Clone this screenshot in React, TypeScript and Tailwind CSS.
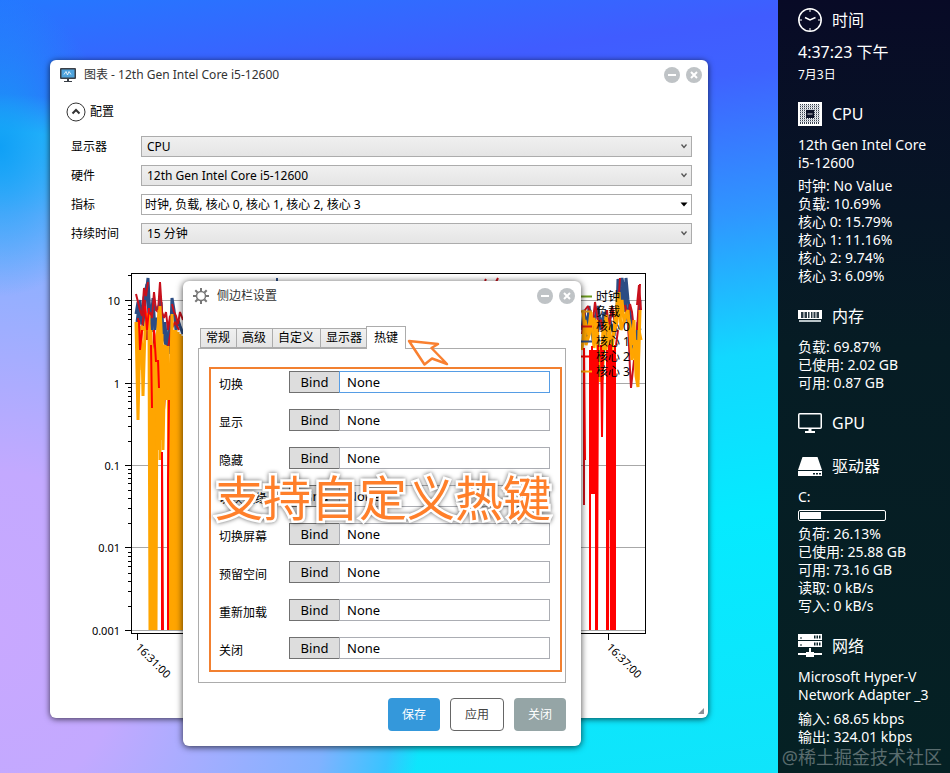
import type { ReactNode } from "react";

const CHART_FIELDS = [
  { id: "monitor", label: "显示器", value: "CPU", options: ["CPU", "内存", "GPU"] },
  { id: "hardware", label: "硬件", value: "12th Gen Intel Core i5-12600", options: ["12th Gen Intel Core i5-12600"] },
  { id: "metrics", label: "指标", value: "时钟, 负载, 核心 0, 核心 1, 核心 2, 核心 3", options: ["时钟, 负载, 核心 0, 核心 1, 核心 2, 核心 3"], flat: true },
  { id: "duration", label: "持续时间", value: "15 分钟", options: ["15 分钟", "30 分钟"] },
];

const HOTKEYS = ["切换", "显示", "隐藏", "切换边缘", "切换屏幕", "预留空间", "重新加载", "关闭"];

const TABS = ["常规", "高级", "自定义", "显示器"];

const DECADES = [
  { label: "10", y: 300.5 },
  { label: "1", y: 383.5 },
  { label: "0.1", y: 465.5 },
  { label: "0.01", y: 547.5 },
  { label: "0.001", y: 630.5 },
];

const LEGEND = [
  { label: "时钟", color: "#6b9a1e" },
  { label: "负载", color: "#d99a1e" },
  { label: "核心 0", color: "#d01818" },
  { label: "核心 1", color: "#2c4d84" },
  { label: "核心 2", color: "#ff0000" },
  { label: "核心 3", color: "#ffa500" },
];

const NAVY = "#2c4d84";
const CRIMSON = "#c8101c";
const RED = "#ff0000";
const ORANGE = "#ffa500";

const SERIES = [
  {
    color: NAVY,
    width: 3,
    points: [
      "136,314 138,302 139,325 141,307 143,326 145,304 146,296 148,278 149,300 151,322 153,298 155,330 157,318 159,320 160,296 162,318 164,340 165,322 167,352 169,330 170,354 172,298 174,310 176,330 178,320 180,326 183,334",
      "137,322 140,300 142,324 144,298 147,284 149,316 152,332 154,305 157,310 161,302 163,336 166,345 168,340 171,316 173,312",
      "582,330 584,310 587,342 589,306 592,334 594,322 598,306 601,330 604,312 607,340 610,320 614,336 617,310 618,279 621,304 623,282 624,312 626,278 628,300 630,312 633,335 636,350 638,322 640,330",
      "586,322 590,310 593,340 600,318 606,330 612,312 616,322 619,290 622,278 625,296 629,330 631,350 634,330 637,345 640,300",
    ],
  },
  {
    color: CRIMSON,
    width: 2,
    points: [
      "136,294 138,302 140,310 142,316 144,288 146,296 148,282 M 150,312 152,318 154,292 156,310 158,312 160,282 162,312 164,318 166,312 168,330 170,316 M 172,304 174,312 176,316 178,324 180,312 183,320",
      "138,318 140,356 142,330 145,300 147,340 149,318 152,410 154,330 157,362 160,318 164,410 168,348 171,330 175,322 179,330",
      "485,281 486,279 M 496,282 498,278",
      "582,334 585,310 588,306 590,312 592,330 595,302 598,322 601,320 604,340 607,310 609,330 612,306 615,322 618,308 620,278 M 625,305 628,320 630,304 632,312 634,330 M 637,305 639,285 641,310",
      "584,350 584,505 M 616,345 618,330 M 628,320 630,370 631,388 634,360 M 637,330 640,284",
    ],
  },
  {
    color: ORANGE,
    width: 3,
    points: [
      "136,322 138,420 140,328 142,348 143,396 145,330 147,314 149,316 150,630 151,330 153,630 154,350 156,630 157,346 159,310 160,320 161,440 162,334 163,450 165,345 166,400 168,346 170,630 171,370 172,314 173,630 174,330 175,630 176,330 177,630 178,332 179,630 180,334 181,630 182,336 183,630",
      "137,322 139,370 141,326 144,330 148,320 152,350 152,630 155,345 158,330 160,306 162,350 164,345 167,380 169,400 172,620 174,345 178,620 180,350 183,620",
      "158,335 158,450 M 160,320 160,460 M 162,345 162,440 M 169,400 169,620",
      "582,350 585,320 588,335 591,312 594,348 597,320 600,382 603,330 606,350 609,325 612,350 615,320 618,296 620,318 622,300 624,322 627,312 630,325 632,345 634,320 636,376 638,387 639,330 641,340",
      "583,310 586,345 590,332 594,318 598,350 602,380 606,315 610,345 614,332 617,322 619,292 621,330 628,310 632,360 636,340 638,380 640,310",
    ],
  },
  {
    color: RED,
    width: 2,
    points: [
      "139,320 140,350 142,330 M 145,306 147,330 149,308 M 154,330 156,362 M 162,630 162,452 163,630 M 168,630 168,480 169,400 M 151,345 152,408 M 158,360 159,388",
      "584,348 585,460 M 590,350 590,630 M 592,346 592,494 M 594,350 594,494 M 596,350 596,630 M 598,345 597,630 M 601,345 602,437 603,350",
      "607,350 607,630 M 609,345 608,630 M 611,345 611,630 M 613,350 613,630 M 615,345 615,630",
      "591,360 591,490 M 593,350 593,492 M 595,350 595,492 M 610,344 610,520 M 612,350 612,560 M 614,350 614,600",
    ],
  },
];

function WindowButtons({ name }: { name: string }) {
  return (
    <div className="ml-auto flex gap-1.5">
      <button type="button" aria-label={`最小化 ${name}`} className="flex size-4 items-center justify-center rounded-full bg-[#bfc3c6]">
        <span className="h-0.5 w-2 bg-white" />
      </button>
      <button type="button" aria-label={`关闭 ${name}`} className="flex size-4 items-center justify-center rounded-full bg-[#bfc3c6]">
        <svg viewBox="0 0 8 8" className="size-2" stroke="white" strokeWidth="2">
          <path d="M1 1L7 7M7 1L1 7" />
        </svg>
      </button>
    </div>
  );
}

function Chart() {
  return (
    <svg viewBox="50 253 658 457" className="mt-[9px] block w-full" fontSize="11" fill="black">
      {DECADES.map((d, i) => (
        <g key={d.label}>
          <path d={`M132 ${d.y}H645`} stroke="#a8a8a8" />
          <path d={`M125 ${d.y}H132`} stroke="black" />
          <text x="120" y={d.y + 4} textAnchor="end">{d.label}</text>
          {i > 0 &&
            [2, 3, 4, 5, 6, 7, 8, 9].map((n) => (
              <path key={n} d={`M128 ${Math.round(d.y - Math.log10(n) * 82.4) + 0.5}H132`} stroke="black" />
            ))}
        </g>
      ))}
      <path d="M128 275.5H132" stroke="black" />
      <path d="M277 281V278" stroke={NAVY} strokeWidth="2" />
      {SERIES.map((s) =>
        s.points.map((p) => (
          <path key={p} d={`M ${p}`} fill="none" stroke={s.color} strokeWidth={s.width} strokeLinejoin="bevel" />
        )),
      )}
      <rect x="131.5" y="273.5" width="514" height="360" fill="none" stroke="black" />
      <path d="M137.500 634V640M608.500 634V640" stroke="black" />
      <text transform="translate(135 648) rotate(45)">16:31:00</text>
      <text transform="translate(606 648) rotate(45)">16:37:00</text>
      {LEGEND.map((l, i) => (
        <g key={l.label} fontSize="12">
          <path d={`M578 ${296.5 + i * 15}H592`} stroke={l.color} strokeWidth="2" />
          <text x="596" y={301 + i * 15}>{l.label}</text>
        </g>
      ))}
    </svg>
  );
}

function ChartWindow() {
  return (
    <section className="absolute top-[60px] left-[50px] h-[658px] w-[658px] rounded-md bg-white text-xs text-black shadow-[0_1px_6px_rgba(0,0,0,0.7)]">
      <header className="flex h-[30px] items-center pr-1.5 pl-2.5">
        <svg viewBox="0 0 16 14" className="h-3.5 w-4">
          <rect width="16" height="11" rx="1" fill="#3a3f47" />
          <rect x="1.500" y="1.500" width="13" height="8" fill="#4fa3dc" />
          <path d="M4 6.500L6 3.500L7.500 7L9 3.500L11 6.500" fill="none" stroke="white" strokeWidth="0.8" />
          <path d="M7 11H9V13H12V14H4V13H7Z" fill="#3a3f47" />
        </svg>
        <h1 className="ml-2 text-[#333]">图表 - 12th Gen Intel Core i5-12600</h1>
        <WindowButtons name="图表" />
      </header>
      <button type="button" className="mt-3 ml-4 flex h-5 items-center gap-1">
        <svg viewBox="0 0 20 20" className="size-5" fill="none" stroke="#333">
          <circle cx="10" cy="10" r="9" />
          <path d="M6.500 11.500L10 8L13.500 11.500" strokeWidth="2" />
        </svg>
        配置
      </button>
      <form className="mt-3.5 flex flex-col gap-2 pr-4 pl-[21px]">
        {CHART_FIELDS.map((f) => (
          <div key={f.id} className="flex h-[21px] items-center">
            <label htmlFor={f.id} className="w-[70px] shrink-0">{f.label}</label>
            <div className="relative flex-1">
              <select
                id={f.id}
                defaultValue={f.value}
                className={
                  f.flat
                    ? "block h-[21px] w-full appearance-none border border-[#acacac] bg-white px-[3px]"
                    : "block h-[21px] w-full appearance-none border border-[#acacac] bg-linear-to-b from-[#f0f0f0] to-[#e5e5e5] px-[5px]"
                }
              >
                {f.options.map((o) => (
                  <option key={o}>{o}</option>
                ))}
              </select>
              <svg viewBox="0 0 8 5" className="pointer-events-none absolute top-2 right-1 h-[5px] w-2">
                {f.flat ? <path d="M0.500 0.500H7.500L4 4.500Z" fill="black" /> : <path d="M1.500 0.500L4 3.500L6.500 0.500" fill="none" stroke="#555" strokeWidth="1.300" />}
              </svg>
            </div>
          </div>
        ))}
      </form>
      <Chart />
      <svg viewBox="0 0 6 6" className="absolute right-1 bottom-1 size-1.5" fill="#8a8f96">
        <path d="M6 0V6H0Z" />
      </svg>
    </section>
  );
}

function SettingsWindow() {
  return (
    <section className="absolute top-[281px] left-[183px] w-[398px] rounded-md bg-white px-[15px] pb-[15px] text-xs text-black shadow-[0_1px_7px_rgba(0,0,0,0.75)]">
      <header className="-mx-[15px] flex h-[30px] items-center pr-1.5 pl-2.5">
        <svg viewBox="0 0 16 16" className="size-4" fill="none" stroke="#777">
          <circle cx="8" cy="8" r="4.500" strokeWidth="1.500" />
          <path d="M8 0V3M8 13V16M0 8H3M13 8H16M2.300 2.300L4.500 4.500M11.500 11.500L13.700 13.700M2.300 13.700L4.500 11.500M11.500 4.500L13.700 2.300" strokeWidth="2" />
        </svg>
        <h2 className="ml-2 text-[#333]">侧边栏设置</h2>
        <WindowButtons name="侧边栏设置" />
      </header>
      <div role="tablist" className="mt-[15px] flex h-[22px] items-end pl-0.5">
        {TABS.map((t) => (
          <button key={t} type="button" role="tab" aria-selected="false" className="h-5 border border-r-0 border-[#acacac] bg-linear-to-b from-[#f0f0f0] to-[#e5e5e5] pr-1.5 pl-[5px]">
            {t}
          </button>
        ))}
        <button type="button" role="tab" aria-selected="true" className="relative top-px -ml-0.5 h-[23px] w-10 border border-b-0 border-[#acacac] bg-white">
          热键
        </button>
      </div>
      <div className="border border-[#acacac] px-[3px] pt-[18px] pb-2.5">
        <div className="relative ml-[7px] border-2 border-[#f28030] px-2 pt-0.5 pb-[11px]">
          <div className="flex flex-col gap-4">
            {HOTKEYS.map((h, i) => (
              <div key={h} className="flex h-[22px] items-center pr-0.5">
                <label htmlFor={`hotkey-${i}`} className="w-[70px] pt-1.5">{h}</label>
                <button type="button" className="h-[22px] w-[51px] border border-[#707070] bg-[#ddd] pt-px text-[13px]">Bind</button>
                <input
                  id={`hotkey-${i}`}
                  readOnly
                  defaultValue="None"
                  className={
                    i === 0
                      ? "-ml-px h-[22px] min-w-0 flex-1 border border-[#569de5] px-[7px] text-[13px]"
                      : "-ml-px h-[22px] min-w-0 flex-1 border border-[#abadb3] px-[7px] text-[13px]"
                  }
                />
              </div>
            ))}
          </div>
          <p className="absolute top-[97px] left-1 text-5xl leading-[64px] whitespace-nowrap text-[#ff7f2a] [-webkit-text-stroke:5px_white] [paint-order:stroke_fill] drop-shadow-[0_0_2px_rgba(0,0,0,0.6)]">
            支持自定义热键
          </p>
        </div>
      </div>
      <footer className="mt-[15px] flex h-[33px] justify-end gap-2.5">
        <button type="button" className="w-[52px] rounded bg-[#3498db] text-white">保存</button>
        <button type="button" className="w-[54px] rounded border border-[#666] bg-white text-[#444]">应用</button>
        <button type="button" className="w-[52px] rounded bg-[#95a5a6] text-white">关闭</button>
      </footer>
      <svg viewBox="0 0 44 30" className="absolute top-[56px] left-[223px] h-[30px] w-11" fill="none" stroke="#f98030" strokeWidth="2.500" strokeLinejoin="round">
        <path d="M3 4L32 7L25.500 11L41 27L26 21.500L18.500 27.500Z" />
      </svg>
    </section>
  );
}

function Heading({ icon, children }: { icon: ReactNode; children: ReactNode }) {
  return (
    <h2 className="flex h-6 items-center gap-2.5 text-base">
      <svg viewBox="0 0 24 24" className="size-6 shrink-0" fill="white" stroke="none">{icon}</svg>
      {children}
    </h2>
  );
}

function Lines({ items }: { items: string[] }) {
  return (
    <ul>
      {items.map((t) => (
        <li key={t}>{t}</li>
      ))}
    </ul>
  );
}

const clockIcon = (
  <g fill="none" stroke="white" strokeWidth="1.500">
    <circle cx="12" cy="12" r="11.200" />
    <path d="M7 9.500L12 12L17.500 9.500" />
    <path d="M12 1V4M12 20V23M1 12H4M20 12H23" strokeWidth="1" />
  </g>
);

const cpuIcon = (
  <g>
    <rect width="24" height="24" />
    <g stroke="#39414f" strokeWidth="1">
      {[2.5, 4.5, 6.5, 8.5, 10.5, 12.5, 14.5, 16.5, 18.5, 20.5].map((n) => (
        <path key={n} d={`M${n} 2V22`} />
      ))}
    </g>
    <g stroke="#c3c8d0" strokeWidth="1">
      {[3.5, 5.5, 7.5, 9.5, 11.5, 13.5, 15.5, 17.5, 19.5].map((n) => (
        <path key={n} d={`M2 ${n}H22`} />
      ))}
    </g>
    <rect x="8" y="8" width="8" height="8" fill="#0a1026" />
    <path d="M9.500 12H14.500" stroke="white" strokeWidth="0.800" />
  </g>
);

const memoryIcon = (
  <g>
    <path d="M0 6H24V15H0Z" />
    <path d="M1 16H23V18H1Z" fill="#b8c4c8" />
    <path d="M3 8H5.500V14H3ZM6.500 8H9V14H6.500ZM10 8H11.500V14H10ZM13 8H14.500V14H13ZM15.500 8H17.500V14H15.500ZM18.500 8H21V14H18.500Z" fill="#2a3a44" />
  </g>
);

const gpuIcon = (
  <g>
    <rect x="0.750" y="2.750" width="22.500" height="14.500" rx="1" fill="none" stroke="white" strokeWidth="1.500" />
    <path d="M10.500 17H13.500V20H17V22H7V20H10.500Z" />
  </g>
);

const driveIcon = (
  <g>
    <path d="M4.500 3H19.500L24 16H0Z" />
    <path d="M0 17H24V22H0Z" />
    <path d="M15 19H17V20.500H15ZM18 19H20V20.500H18ZM21 19H23V20.500H21Z" fill="#0a2228" />
  </g>
);

const networkIcon = (
  <g>
    <path d="M0 0H24V6H0ZM0 7H24V13H0ZM11 14H13V18H16V19H24V21H16V23H8V21H0V19H8V18H11Z" />
    <path d="M16 1.500H17.500V4.500H16ZM18.500 1.500H20V4.500H18.500ZM21 1.500H22.500V4.500H21ZM16 8.500H17.500V11.500H16ZM18.500 8.500H20V11.500H18.500ZM21 8.500H22.500V11.500H21ZM2 3.500H4V4.500H2ZM2 10.500H4V11.500H2Z" fill="#0a2228" />
  </g>
);

function Sidebar() {
  return (
    <aside className="relative flex w-[172px] shrink-0 flex-col gap-[19px] bg-linear-to-b from-[#080a26] via-[#061c24] via-45% to-[#052124] pt-2 pl-5 text-sm leading-[18px] text-white">
      <section>
        <Heading icon={clockIcon}>时间</Heading>
        <p className="mt-2.5 text-base leading-5">4:37:23 下午</p>
        <p className="mt-1 text-xs leading-[17px]">7月3日</p>
      </section>
      <section>
        <Heading icon={cpuIcon}>CPU</Heading>
        <p className="mt-2.5 mb-[5px] whitespace-nowrap">12th Gen Intel Core<br />i5-12600</p>
        <Lines items={["时钟: No Value", "负载: 10.69%", "核心 0: 15.79%", "核心 1: 11.16%", "核心 2: 9.74%", "核心 3: 6.09%"]} />
      </section>
      <section className="flex flex-col gap-2.5">
        <Heading icon={memoryIcon}>内存</Heading>
        <Lines items={["负载: 69.87%", "已使用: 2.02 GB", "可用: 0.87 GB"]} />
      </section>
      <section>
        <Heading icon={gpuIcon}>GPU</Heading>
      </section>
      <section>
        <Heading icon={driveIcon}>驱动器</Heading>
        <p className="mt-2.5">C:</p>
        <div className="my-1 h-[11px] w-[88px] rounded-xs border border-white p-px">
          <div className="h-full w-1/4 bg-white" />
        </div>
        <Lines items={["负荷: 26.13%", "已使用: 25.88 GB", "可用: 73.16 GB", "读取: 0 kB/s", "写入: 0 kB/s"]} />
      </section>
      <section>
        <Heading icon={networkIcon}>网络</Heading>
        <p className="mt-2.5 mb-1.5 whitespace-nowrap">Microsoft Hyper-V<br />Network Adapter _3</p>
        <Lines items={["输入: 68.65 kbps", "输出: 324.01 kbps"]} />
      </section>
      <p className="absolute right-2 bottom-1 text-lg leading-6 whitespace-nowrap text-white/35">@稀土掘金技术社区</p>
    </aside>
  );
}

export default function App() {
  return (
    <div className="flex min-h-screen overflow-hidden font-['Noto_Sans','Noto_Sans_CJK_SC',sans-serif]">
      <main className="relative min-w-0 flex-1 bg-[radial-gradient(ellipse_110px_150px_at_0%_19%,#10a0f6_0%,transparent_100%),radial-gradient(ellipse_430px_540px_at_0%_82%,#c8a8ff_0%,#c3a9ff_30%,#80b2ff_78%,#38c4ff_93%,transparent_100%),linear-gradient(172deg,#2478ff_0%,#405cff_14%,#3f62ff_20%,#2f96ff_36%,#12d8ff_52%,#05eaff_70%,#10e4fb_100%)]">
        <ChartWindow />
        <SettingsWindow />
      </main>
      <Sidebar />
    </div>
  );
}
